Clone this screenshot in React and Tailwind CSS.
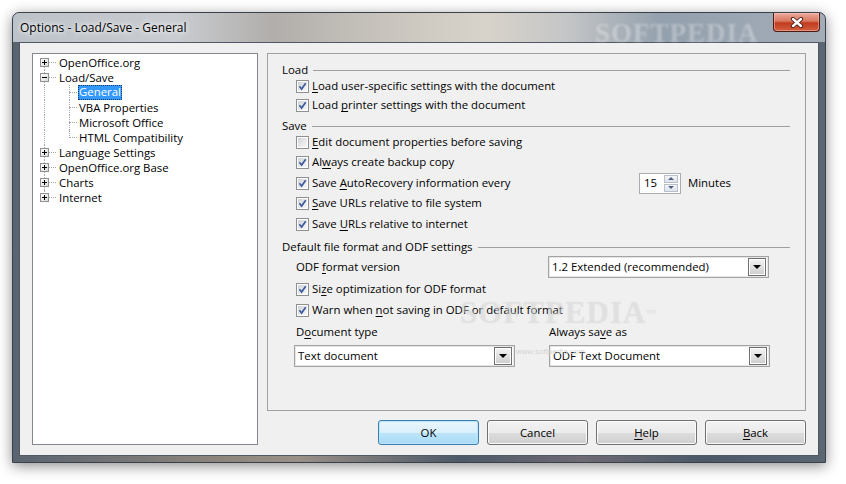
import React from 'react';

const Check = ({ checked = true }) => (
    <span className="w-[13px] h-[13px] shrink-0 border border-[#8e8f8f] bg-white p-[1px] flex">
        <span className="flex-1 bg-gradient-to-br from-[#cfd3d9] via-[#e4e6e9] to-[#f8f8f8] flex items-center justify-center">
            {checked && (
                <svg width="9" height="9" viewBox="0 0 9 9">
                    <path d="M1.4 4.3 L3.6 7 L7.7 1.3" fill="none" stroke="#3d5b9c" strokeWidth="1.7" />
                </svg>
            )}
        </span>
    </span>
);

const CheckRow = ({ checked = true, className = '', children }) => (
    <div className={`flex items-center h-[16px] ${className}`}>
        <Check checked={checked} />
        <span className="ml-[3px] whitespace-nowrap">{children}</span>
    </div>
);

const Heading = ({ className = '', children }) => (
    <div className={`flex items-center h-[16px] ${className}`}>
        <span className="whitespace-nowrap">{children}</span>
        <div className="flex-1 h-px bg-[#a0a0a0] ml-[5px]"></div>
    </div>
);

const U = ({ children }) => <span className="underline underline-offset-[2px]">{children}</span>;

const Select = ({ value, className = '' }) => (
    <div className={`h-[22px] border border-[#a3a3a3] bg-white shadow-[inset_0_0_0_1px_#e6e6e6] flex items-center pl-[3px] pr-[2px] ${className}`}>
        <span className="flex-1 whitespace-nowrap">{value}</span>
        <div className="w-[18px] h-[18px] border border-[#6f6f6f] shadow-[inset_0_0_0_1px_#ffffff] bg-gradient-to-b from-[#f4f4f4] to-[#cdcdcd] flex items-center justify-center">
            <span className="w-0 h-0 border-l-[4px] border-r-[4px] border-t-[4px] border-l-transparent border-r-transparent border-t-black"></span>
        </div>
    </div>
);

const SpinBox = () => (
    <div className="w-[42px] h-[21px] border border-[#abadb3] bg-white flex items-center">
        <span className="flex-1 pl-[4px]">15</span>
        <div className="w-[14px] h-[17px] mr-[2px] flex flex-col gap-px">
            <div className="flex-1 border border-[#b9c0cb] bg-gradient-to-b from-[#f4f5f7] to-[#dfe3ea] flex items-center justify-center">
                <span className="w-0 h-0 border-l-[3px] border-r-[3px] border-b-[3px] border-l-transparent border-r-transparent border-b-[#4d6185]"></span>
            </div>
            <div className="flex-1 border border-[#b9c0cb] bg-gradient-to-b from-[#f4f5f7] to-[#dfe3ea] flex items-center justify-center">
                <span className="w-0 h-0 border-l-[3px] border-r-[3px] border-t-[3px] border-l-transparent border-r-transparent border-t-[#4d6185]"></span>
            </div>
        </div>
    </div>
);

const ExpandBox = ({ open }) => (
    <svg width="9" height="9" viewBox="0 0 9 9" className="relative ml-[7px]">
        <defs>
            <linearGradient id="eb" x1="0" y1="0" x2="1" y2="1">
                <stop offset="0" stopColor="#ffffff" />
                <stop offset="1" stopColor="#d8d8d8" />
            </linearGradient>
        </defs>
        <rect x="0.5" y="0.5" width="8" height="8" fill="url(#eb)" stroke="#919191" />
        <path d="M2 4.5h5" stroke="#000" />
        {!open && <path d="M4.5 2v5" stroke="#000" />}
    </svg>
);

const tree = [
    { label: 'OpenOffice.org', pos: 'first' },
    { label: 'Load/Save', open: true },
    { label: 'General', child: true, selected: true },
    { label: 'VBA Properties', child: true },
    { label: 'Microsoft Office', child: true },
    { label: 'HTML Compatibility', child: true, last: true },
    { label: 'Language Settings' },
    { label: 'OpenOffice.org Base' },
    { label: 'Charts' },
    { label: 'Internet', pos: 'last' },
];

const vLine = {
    first: 'absolute left-[11px] top-[7px] bottom-0 border-l border-dotted border-[#a8a8a8]',
    last: 'absolute left-[11px] top-0 h-[8px] border-l border-dotted border-[#a8a8a8]',
    mid: 'absolute left-[11px] top-0 bottom-0 border-l border-dotted border-[#a8a8a8]',
};

const TreeRow = ({ item }) => (
    <div className="flex items-center h-[15px]">
        <div className="w-[22px] h-full relative flex items-center">
            <span className={vLine[item.pos || 'mid']}></span>
            {!item.child && (
                <>
                    <span className="absolute left-[16px] w-[7px] top-[7px] border-t border-dotted border-[#a8a8a8]"></span>
                    <ExpandBox open={item.open} />
                </>
            )}
        </div>
        {item.child ? (
            <>
                <div className="w-[20px] h-full ml-[4px] relative">
                    <span
                        className={
                            item.last
                                ? 'absolute left-[10px] top-0 h-[8px] border-l border-dotted border-[#a8a8a8]'
                                : 'absolute left-[10px] top-0 bottom-0 border-l border-dotted border-[#a8a8a8]'
                        }
                    ></span>
                    <span className="absolute left-[10px] right-[2px] top-[7px] border-t border-dotted border-[#a8a8a8]"></span>
                </div>
                {item.selected ? (
                    <span className="ml-[-1px] h-[15px] leading-[13px] px-px bg-[#3399ff] text-white outline outline-1 outline-dotted outline-[#1a3a66] outline-offset-[-1px]">
                        {item.label}
                    </span>
                ) : (
                    <span className="leading-[15px]">{item.label}</span>
                )}
            </>
        ) : (
            <span className="ml-[4px] leading-[15px]">{item.label}</span>
        )}
    </div>
);

const Button = ({ children, primary }) => (
    <button
        className={`w-[101px] h-[25px] rounded-[3px] border flex items-center justify-center ${
            primary
                ? 'border-[#3c7fb1] shadow-[inset_0_0_0_1px_#b9e4f9] bg-[linear-gradient(to_bottom,#eaf6fd_0%,#d9f0fc_50%,#bee6fd_51%,#a7d9f5_100%)]'
                : 'border-[#707070] shadow-[inset_0_0_0_1px_#fbfbfb] bg-[linear-gradient(to_bottom,#f2f2f2_0%,#ebebeb_50%,#dddddd_51%,#cfcfcf_100%)]'
        }`}
    >
        {children}
    </button>
);

export default function App() {
    return (
        <div className="w-[846px] h-[484px] bg-white relative overflow-hidden pl-[12px] pt-[12px] text-[11.4px] text-black font-['Open_Sans','Noto_Sans',sans-serif]">
            <div className="w-[814px] h-[451px] rounded-t-[7px] border border-[#3a414b] shadow-[0_3px_14px_rgba(0,0,0,0.45)] bg-[linear-gradient(to_right,#5a6470_0%,#8d857c_25%,#9a9087_35%,#4d5968_55%,#6f6a74_70%,#4b5868_85%,#5c6774_100%)] flex flex-col">
                {/* title bar */}
                <div className="h-[29px] rounded-t-[6px] flex justify-between bg-[linear-gradient(to_right,#bcc2c9_0%,#c9ccd0_20%,#b1aeab_32%,#c7c3bc_45%,#d8d3ca_58%,#c5c6c7_68%,#93a0ad_80%,#a3adb8_100%)] relative">
                    <span className="absolute left-[582px] top-[0px] text-[27px] font-bold tracking-[1px] text-white/30 font-['Liberation_Serif',serif] blur-[1px]">SOFTPEDIA</span>
                    <span className="pl-[7px] pt-[6px] text-[12px] [text-shadow:0_0_8px_#ffffff,0_0_4px_#ffffff] relative">
                        Options - Load/Save - General
                    </span>
                    <div className="relative w-[47px] h-[19px] mr-[5px] rounded-b-[4px] border border-t-0 border-[#4b1b14] shadow-[inset_0_0_0_1px_rgba(255,200,190,0.5)] bg-[linear-gradient(to_bottom,#e9ab9e_0%,#d9775f_45%,#c23a1f_55%,#d1603f_100%)] flex items-center justify-center">
                        <svg width="14" height="11" viewBox="0 0 14 11">
                            <path d="M3 2 L11 9 M11 2 L3 9" stroke="#4a1c14" strokeWidth="4.2" strokeLinecap="round" />
                            <path d="M3 2 L11 9 M11 2 L3 9" stroke="#ffffff" strokeWidth="2.4" strokeLinecap="round" />
                        </svg>
                    </div>
                </div>

                {/* client */}
                <div className="mx-[6px] h-[414px] border border-[#4f5864] bg-[#f0f0f0] flex gap-[9px] pt-[10px] px-[12px] pb-[10px]">
                    {/* tree */}
                    <div className="w-[226px] h-[392px] border border-[#828790] bg-white pt-px">
                        {tree.map((item) => (
                            <TreeRow key={item.label} item={item} />
                        ))}
                    </div>

                    {/* right side */}
                    <div className="flex-1 flex flex-col">
                        <div className="h-[358px] border border-[#a0a0a0] pt-[8px] pl-[14px] pr-[15px]">
                            <Heading>Load</Heading>
                            <div className="pl-[14px]">
                                <CheckRow><U>L</U>oad user-specific settings with the document</CheckRow>
                                <CheckRow className="mt-[3px]">Load <U>p</U>rinter settings with the document</CheckRow>
                            </div>

                            <Heading className="mt-[5px]">Save</Heading>
                            <div className="pl-[14px]">
                                <CheckRow checked={false}><U>E</U>dit document properties before saving</CheckRow>
                                <CheckRow className="mt-[4px]">Al<U>w</U>ays create backup copy</CheckRow>
                                <div className="flex items-center h-[16px] mt-[5px]">
                                    <div className="w-[343px] shrink-0 flex items-center">
                                        <Check />
                                        <span className="ml-[3px] whitespace-nowrap">Save <U>A</U>utoRecovery information every</span>
                                    </div>
                                    <SpinBox />
                                    <span className="ml-[7px]">Minutes</span>
                                </div>
                                <CheckRow className="mt-[4px]"><U>S</U>ave URLs relative to file system</CheckRow>
                                <CheckRow className="mt-[5px]">Save <U>U</U>RLs relative to internet</CheckRow>
                            </div>

                            <Heading className="mt-[7px]">Default file format and ODF settings</Heading>
                            <div className="pl-[14px]">
                                <div className="flex items-center h-[16px] mt-[4px]">
                                    <span className="w-[252px] shrink-0">ODF <U>f</U>ormat version</span>
                                    <Select value="1.2 Extended (recommended)" className="w-[221px]" />
                                </div>
                                <CheckRow className="mt-[6px]">Si<U>z</U>e optimization for ODF format</CheckRow>
                                <CheckRow className="mt-[5px]">Warn when <U>n</U>ot saving in ODF or default format</CheckRow>
                                <div className="flex ml-[-2px] mt-[6px] gap-[34px]">
                                    <div className="w-[221px]">
                                        <div className="h-[16px] flex items-center pl-[2px]">D<U>o</U>cument type</div>
                                        <Select value="Text document" className="mt-[5px]" />
                                    </div>
                                    <div className="w-[221px]">
                                        <div className="h-[16px] flex items-center">Always sa<U>v</U>e as</div>
                                        <Select value="ODF Text Document" className="mt-[5px]" />
                                    </div>
                                </div>
                            </div>
                        </div>

                        <div className="mt-[9px] flex justify-end gap-[8px]">
                            <Button primary>OK</Button>
                            <Button>Cancel</Button>
                            <Button><U>H</U>elp</Button>
                            <Button><U>B</U>ack</Button>
                        </div>
                    </div>
                </div>
            </div>

            {/* watermark */}
            <div className="absolute left-[460px] top-[296px] pointer-events-none text-[31px] leading-[34px] font-bold tracking-[1px] text-white/30 font-['Liberation_Serif',serif] [text-shadow:0_0_1px_rgba(160,160,160,0.35)]">
                SOFTPEDIA<span className="text-[9px] align-top">™</span>
            </div>
            <div className="absolute left-[516px] top-[346px] pointer-events-none text-[8px] text-[#d4d4d4] font-['Liberation_Sans',sans-serif]">
                www.softpedia.com
            </div>
        </div>
    );
}
